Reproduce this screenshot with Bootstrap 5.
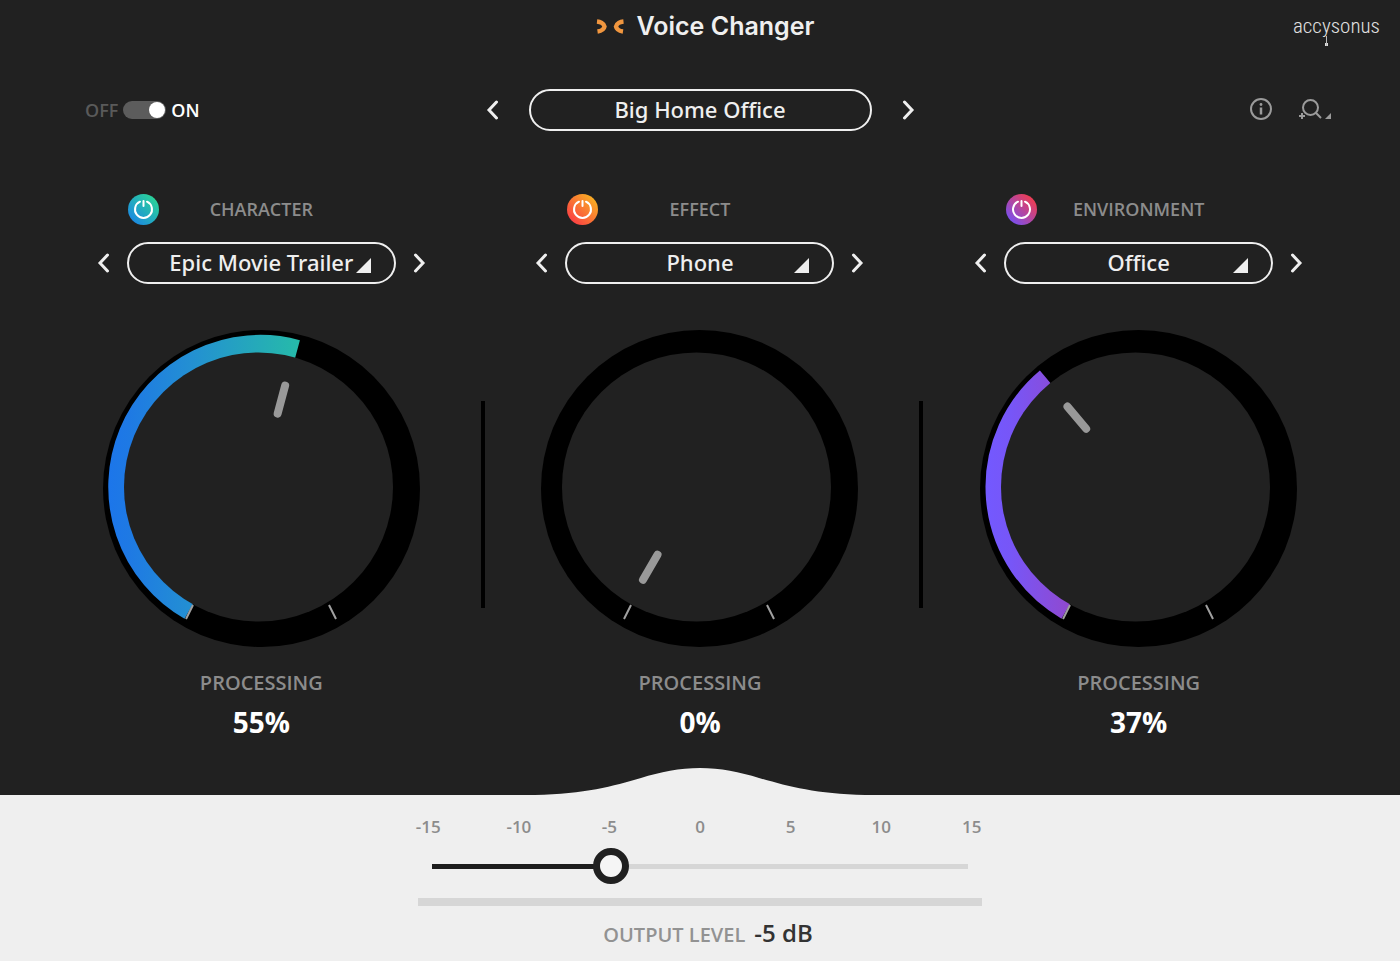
<!DOCTYPE html>
<html lang="en">
<head>
<meta charset="utf-8">
<meta name="viewport" content="width=device-width, initial-scale=1">
<title>Voice Changer</title>
<link href="https://cdn.jsdelivr.net/npm/bootstrap@5.3.0/dist/css/bootstrap.min.css" rel="stylesheet">
<style>
  body { background: #212121; color: #efefef; font-family: "Open Sans", "Noto Sans", sans-serif; }
  .three-zone { display: grid; grid-template-columns: 1fr auto 1fr; align-items: center; }
  .app-header { height: 52px; }
  .app-brand { gap: 13px; padding-left: 10px; }
  .app-title { font: 600 25px/32px Inter, sans-serif; }
  .maker { font: 300 21px/32px "Roboto Condensed", "Liberation Sans Narrow", "Liberation Sans", sans-serif; color: #e0e0e0; }
  .maker-stem { position: relative; }
  .maker-stem::after { content: ""; position: absolute; left: 3px; top: 22px; width: 3px; height: 10px;
    background: linear-gradient(#bbb, #bbb) center top / 1px 100% no-repeat, linear-gradient(#ddd, #ddd) center bottom / 3px 3px no-repeat; }
  .toolbar { margin-top: 37px; padding: 0 69px; }
  .icon-btn { background: none; border: 0; padding: 0; color: inherit; display: inline-flex; }
  .tool-color { color: #9b9b9b; }
  .switch-text { font-size: 18px; line-height: 24px; font-weight: 600; gap: 5px; }
  .switch-off { color: #5a5a5a; }
  .form-check-input.power-switch { width: 43px; height: 18px; margin: 0; border: 0; box-shadow: none; background-color: #5c5c5c;
    background-image: url("data:image/svg+xml,%3csvg xmlns='http://www.w3.org/2000/svg' viewBox='0 0 18 18'%3e%3ccircle cx='9' cy='9' r='8' fill='%23fff'/%3e%3c/svg%3e") !important; background-size: 18px 18px; }
  .pill { height: 42px; border: 2px solid #efefef; border-radius: 21px; background-color: transparent; color: #efefef;
    font: 500 22px/28px "Noto Sans", sans-serif; text-align: center; text-align-last: center; padding: 0 22px 2px; }
  .preset-nav { gap: 30px; }
  .preset-pill { width: 343px; }
  .voice-pill { width: 269px; appearance: none;
    background: url("data:image/svg+xml,%3csvg xmlns='http://www.w3.org/2000/svg' viewBox='0 0 15 15'%3e%3cpath d='M0 15L15 0V15Z' fill='%23efefef'/%3e%3c/svg%3e") no-repeat right 23px top 14px / 15px 15px; }
  .voice-pill option { background: #212121; }
  .modules { display: grid; grid-template-columns: 1fr 8px 1fr 8px 1fr; padding: 0 46px; margin-top: 63px; }
  .divider { height: 207px; margin-top: 207px; border-right: 4px solid #000; }
  .module-head { width: 266px; height: 31px; }
  .module-name { font-size: 18px; line-height: 24px; font-weight: 600; color: #8c8c8c; padding-bottom: 2px; }
  .module-select { margin-top: 17px; gap: 17px; }
  .dial { width: 317px; height: 317px; margin-top: 46px; }
  .process-name { font-size: 20px; line-height: 24px; font-weight: 600; color: #8c8c8c; margin-top: 24px; }
  .process-value { font-size: 28px; line-height: 32px; font-weight: 700; color: #fff; margin-top: 11px; }
  .swell { width: 330px; height: 28px; margin-top: 29px; }
  .output { background: #efefef; padding: 22px 0 12px; color: #8c8c8c; }
  .scale { width: 634px; font-size: 17px; line-height: 20px; font-weight: 600; }
  .scale span { flex: 1 1 0; text-align: center; }
  .level-range { appearance: none; width: 572px; height: 36px; margin-top: 11px; background: none; }
  .level-range::-webkit-slider-runnable-track { height: 5px;
    background: linear-gradient(to right, transparent 18px, #1d1d1d 18px, #1d1d1d var(--fill), #d6d6d6 var(--fill), #d6d6d6 calc(100% - 18px), transparent calc(100% - 18px)); }
  .level-range::-webkit-slider-thumb { appearance: none; width: 36px; height: 36px; margin-top: -16px; border: 7px solid #202020; border-radius: 50%; background: #f5f5f5; }
  .meter-bar { width: 564px; height: 8px; background: #d6d6d6; margin-top: 14px; }
  .output-text { margin-top: 13px; gap: 9px; }
  .output-name { font-size: 20px; line-height: 28px; font-weight: 600; color: #929292; }
  .output-value { font-size: 24px; line-height: 28px; font-weight: 600; color: #333; }
</style>
</head>
<body>
<svg width="0" height="0" class="position-absolute" aria-hidden="true">
  <defs>
    <linearGradient id="teal" x1="0" y1="1" x2="1" y2="0"><stop offset=".1" stop-color="#1b86e4"/><stop offset=".9" stop-color="#2bd695"/></linearGradient>
    <linearGradient id="fire" x1="0" y1="1" x2="1" y2="0"><stop offset=".1" stop-color="#fb3b45"/><stop offset=".9" stop-color="#f8b222"/></linearGradient>
    <linearGradient id="violet" x1="0" y1="1" x2="1" y2="0"><stop offset=".1" stop-color="#7450f5"/><stop offset=".9" stop-color="#f53c4a"/></linearGradient>
    <linearGradient id="tealArc" gradientUnits="userSpaceOnUse" x1="6" y1="0" x2="197" y2="0"><stop offset="0" stop-color="#1c76ea"/><stop offset=".1" stop-color="#1e79e4"/><stop offset=".42" stop-color="#238fd3"/><stop offset="1" stop-color="#26bba9"/></linearGradient>
    <linearGradient id="violetArc" gradientUnits="userSpaceOnUse" x1="6" y1="0" x2="90" y2="0"><stop offset="0" stop-color="#7359ff"/><stop offset=".3" stop-color="#7756f7"/><stop offset="1" stop-color="#9049cf"/></linearGradient>
    <g id="powerGlyph" fill="none" stroke="#fff" stroke-width="2" stroke-linecap="round"><path d="M12 7.700a8.500 8.500 0 1 0 7 0M15.500 7V12"/></g>
    <path id="chevL" d="M10.500 2L3 10l7.500 8" fill="none" stroke="#efefef" stroke-width="3" stroke-linecap="round"/>
    <path id="chevR" d="M2.500 2L10 10l-7.500 8" fill="none" stroke="#efefef" stroke-width="3" stroke-linecap="round"/>
    <circle id="dialBase" cx="158.500" cy="158.500" r="158.500"/>
    <circle id="dialFace" cx="155.500" cy="157" r="134.500" fill="#212121"/>
    <path id="ticks" d="M90 275l-7 14M226 275l7 14" stroke="#a0a0a0" stroke-width="2"/>
    <line id="hand" x1="155" y1="52" x2="155" y2="81" stroke="#999" stroke-width="8" stroke-linecap="round"/>
  </defs>
</svg>

<div class="min-vh-100 d-flex flex-column">
  <header class="app-header three-zone px-3">
    <span></span>
    <div class="app-brand d-flex align-items-center">
      <svg width="28" height="16" viewBox="0 0 28 16" fill="none" stroke="#f0963f" stroke-width="4.500"><path d="M1 3.500C4 3.800 8 5.500 8.500 8.500C8 11.500 5 13 1.500 13.500M27.500 3.500C24.500 3.800 20.500 5.500 20 8.500C20.500 11.500 23.500 13 27 13.500"/></svg>
      <h1 class="app-title m-0">Voice Changer</h1>
    </div>
    <span class="maker text-end pe-1">acc<span class="maker-stem">y</span>sonus</span>
  </header>

  <div class="toolbar three-zone">
    <div class="d-flex align-items-center ms-3 switch-text">
      <label for="power" class="switch-off">OFF</label>
      <div class="form-switch p-0 m-0 d-flex"><input class="form-check-input power-switch" type="checkbox" role="switch" id="power" checked></div>
      <label for="power" class="text-white">ON</label>
    </div>
    <div class="preset-nav d-flex align-items-center">
      <button class="icon-btn" aria-label="Previous preset"><svg width="13" height="20"><use href="#chevL"/></svg></button>
      <button class="pill preset-pill">Big Home Office</button>
      <button class="icon-btn" aria-label="Next preset"><svg width="13" height="20"><use href="#chevR"/></svg></button>
    </div>
    <div class="d-flex align-items-center justify-content-end tool-color gap-4">
      <button class="icon-btn" aria-label="Info"><svg width="24" height="24" viewBox="0 0 24 24" fill="none" stroke="currentColor" stroke-width="2"><circle cx="12" cy="11" r="10"/><path d="M12 9.500v7" stroke-width="2.500"/><circle cx="12" cy="6.500" r="1.400" fill="currentColor" stroke="none"/></svg></button>
      <button class="icon-btn" aria-label="Zoom"><svg width="34" height="24" viewBox="0 0 34 24" fill="none" stroke="currentColor" stroke-width="2"><circle cx="13.500" cy="9.500" r="7.500"/><path d="M18.800 14.800L24 20"/><path d="M2 18h6M5 15v6"/><path d="M28 21l6-6v6z" fill="currentColor" stroke="none"/></svg></button>
    </div>
  </div>

  <main class="modules">
    <section class="d-flex flex-column align-items-center">
      <div class="module-head three-zone">
        <button class="icon-btn" aria-label="Character power"><svg width="31" height="31"><circle cx="15.500" cy="15.500" r="15.500" fill="url(#teal)"/><use href="#powerGlyph"/></svg></button>
        <h2 class="module-name m-0">CHARACTER</h2>
      </div>
      <div class="module-select d-flex align-items-center">
        <button class="icon-btn" aria-label="Previous character"><svg width="13" height="20"><use href="#chevL"/></svg></button>
        <select class="pill voice-pill" aria-label="Character"><option>Epic Movie Trailer</option></select>
        <button class="icon-btn" aria-label="Next character"><svg width="13" height="20"><use href="#chevR"/></svg></button>
      </div>
      <svg class="dial" viewBox="0 0 317 317" role="img" aria-label="Character 55%">
        <use href="#dialBase"/>
        <path d="M86.500 280A142 142 0 0 1 194.300 19.800" fill="none" stroke="url(#tealArc)" stroke-width="20"/>
        <use href="#dialFace"/><use href="#ticks"/><use href="#hand" transform="rotate(15 155 157)"/>
      </svg>
      <div class="process-name">PROCESSING</div>
      <div class="process-value">55%</div>
    </section>
    <div class="divider"></div>
    <section class="d-flex flex-column align-items-center">
      <div class="module-head three-zone">
        <button class="icon-btn" aria-label="Effect power"><svg width="31" height="31"><circle cx="15.500" cy="15.500" r="15.500" fill="url(#fire)"/><use href="#powerGlyph"/></svg></button>
        <h2 class="module-name m-0">EFFECT</h2>
      </div>
      <div class="module-select d-flex align-items-center">
        <button class="icon-btn" aria-label="Previous effect"><svg width="13" height="20"><use href="#chevL"/></svg></button>
        <select class="pill voice-pill" aria-label="Effect"><option>Phone</option></select>
        <button class="icon-btn" aria-label="Next effect"><svg width="13" height="20"><use href="#chevR"/></svg></button>
      </div>
      <svg class="dial" viewBox="0 0 317 317" role="img" aria-label="Effect 0%">
        <use href="#dialBase"/><use href="#dialFace"/><use href="#ticks"/><use href="#hand" transform="rotate(-150 155 158)"/>
      </svg>
      <div class="process-name">PROCESSING</div>
      <div class="process-value">0%</div>
    </section>
    <div class="divider"></div>
    <section class="d-flex flex-column align-items-center">
      <div class="module-head three-zone">
        <button class="icon-btn" aria-label="Environment power"><svg width="31" height="31"><circle cx="15.500" cy="15.500" r="15.500" fill="url(#violet)"/><use href="#powerGlyph"/></svg></button>
        <h2 class="module-name m-0">ENVIRONMENT</h2>
      </div>
      <div class="module-select d-flex align-items-center">
        <button class="icon-btn" aria-label="Previous environment"><svg width="13" height="20"><use href="#chevL"/></svg></button>
        <select class="pill voice-pill" aria-label="Environment"><option>Office</option></select>
        <button class="icon-btn" aria-label="Next environment"><svg width="13" height="20"><use href="#chevR"/></svg></button>
      </div>
      <svg class="dial" viewBox="0 0 317 317" role="img" aria-label="Environment 37%">
        <use href="#dialBase"/>
        <path d="M86.500 280A142 142 0 0 1 66.300 48.200" fill="none" stroke="url(#violetArc)" stroke-width="20"/>
        <use href="#dialFace"/><use href="#ticks"/><use href="#hand" transform="rotate(-40 155 157)"/>
      </svg>
      <div class="process-name">PROCESSING</div>
      <div class="process-value">37%</div>
    </section>
  </main>

  <svg class="swell d-block mx-auto" viewBox="0 0 330 28" aria-hidden="true"><path d="M0 28C50 27 78 19 106 11C125 5 145 1 165 1S205 5 224 11C252 19 280 27 330 28Z" fill="#efefef"/></svg>
  <footer class="output flex-grow-1 d-flex flex-column align-items-center">
    <div class="scale d-flex"><span>-15</span><span>-10</span><span>-5</span><span>0</span><span>5</span><span>10</span><span>15</span></div>
    <input class="level-range" type="range" id="level" min="-15" max="15" value="-5" style="--fill: 34.4%">
    <div class="meter-bar"></div>
    <div class="output-text d-flex align-items-baseline ps-3">
      <label for="level" class="output-name">OUTPUT LEVEL</label>
      <output for="level" class="output-value">-5 dB</output>
    </div>
  </footer>
</div>
<script src="https://cdn.jsdelivr.net/npm/bootstrap@5.3.0/dist/js/bootstrap.bundle.min.js"></script>
</body>
</html>
